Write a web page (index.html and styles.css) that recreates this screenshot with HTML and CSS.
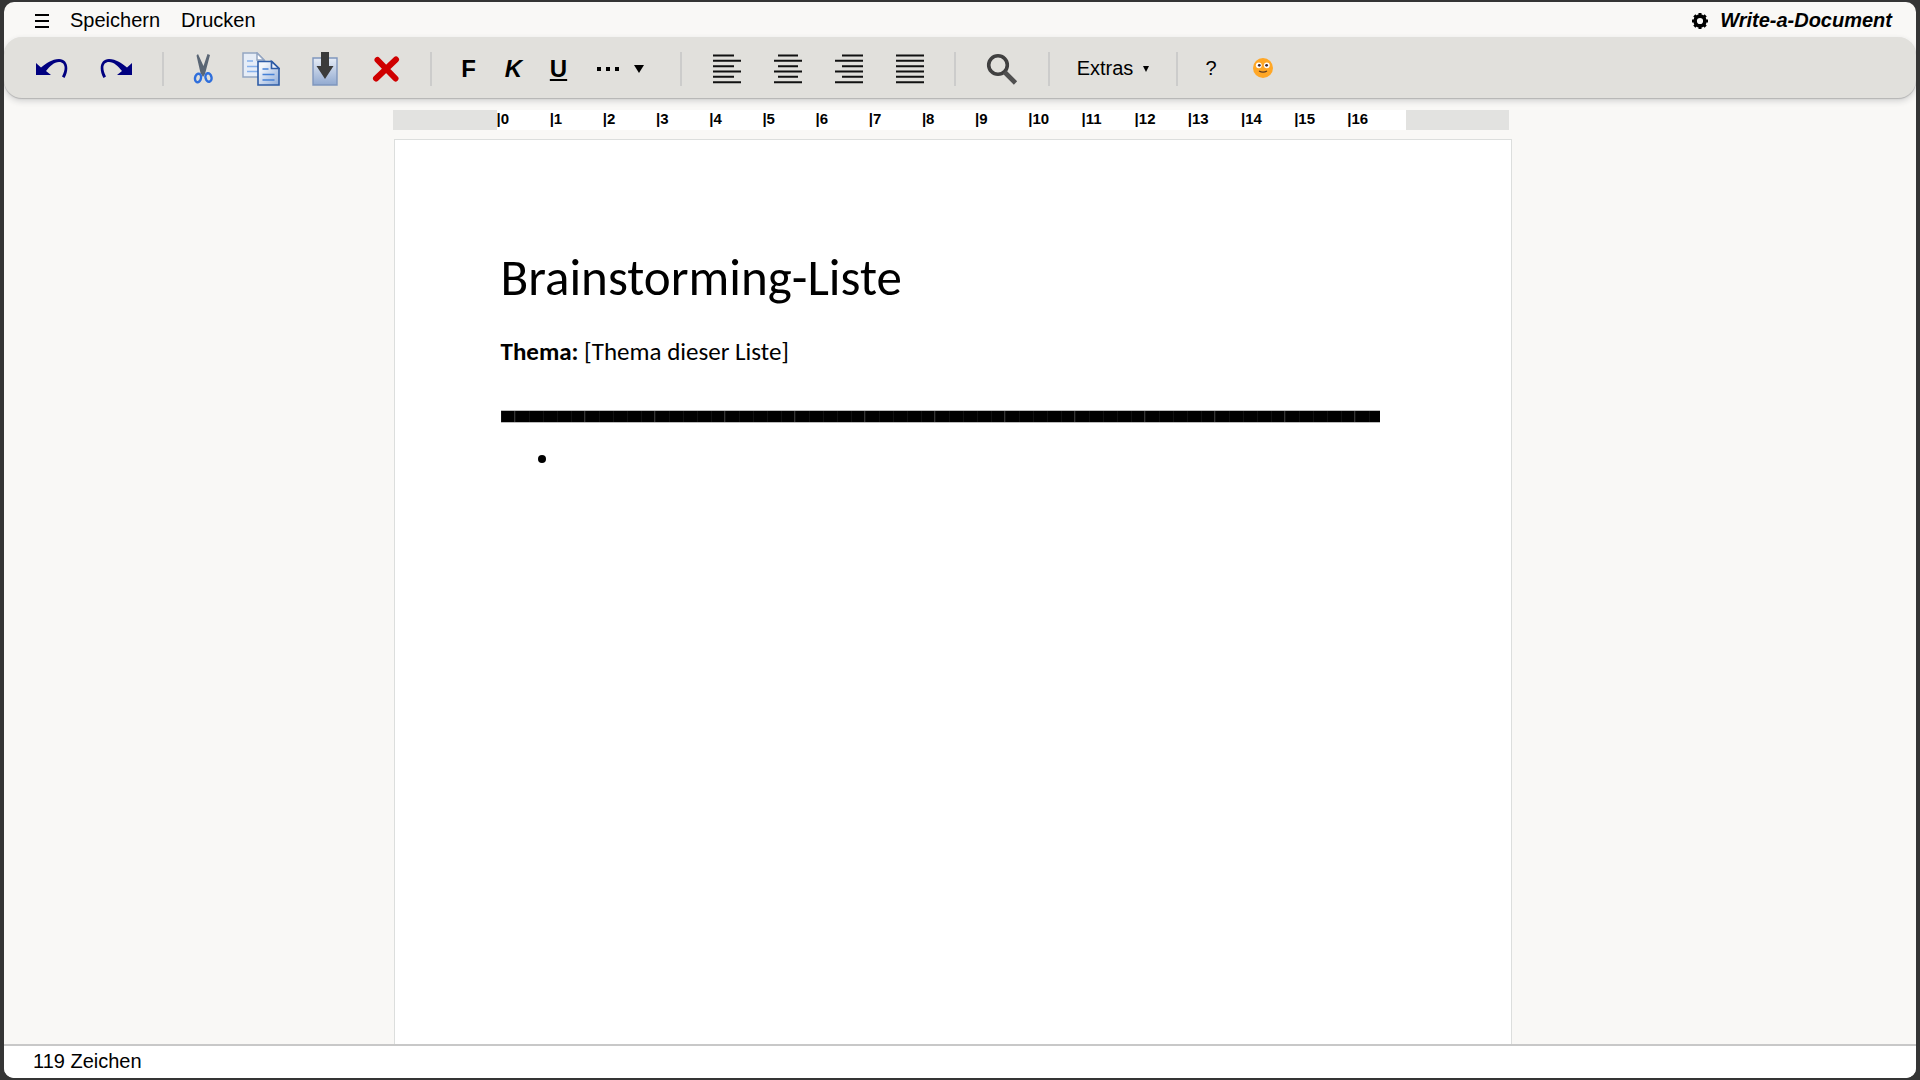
FILE: index.html
```html
<!DOCTYPE html>
<html lang="de">
<head>
<meta charset="utf-8">
<title>Write-a-Document</title>
<link rel="stylesheet" href="styles.css">
</head>
<body>
<div class="window">
  <header class="menubar">
    <button class="menu-btn" aria-label="Menü"><svg width="14" height="14" viewBox="0 0 14 14"><path d="M0 1h14M0 7h14M0 13h14" stroke="#000" stroke-width="2"/></svg></button>
    <button class="menu-btn">Speichern</button>
    <button class="menu-btn">Drucken</button>
    <div class="brand">
      <button class="menu-btn" aria-label="Einstellungen"><svg width="16" height="16" viewBox="0 0 18 18"><circle cx="9" cy="9" r="5.500" fill="none" stroke="#000" stroke-width="4"/><path d="M9 0v3M9 15v3M0 9h3M15 9h3M2.6 2.6l2.2 2.2M13.2 13.2l2.2 2.2M2.6 15.4l2.2-2.2M13.2 4.8l2.2-2.2" stroke="#000" stroke-width="3.4"/></svg></button>
      <span class="brand-name">Write-a-Document</span>
    </div>
  </header>

  <div class="toolbar" role="toolbar" aria-label="Werkzeuge">
    <button class="tool history" aria-label="Rückgängig"><svg width="32" height="20" viewBox="0 0 32 20"><path d="M0 4v12h15l-5-4C14 7 18 3 23 3c6 0 7.500 6 3 14.500l2.500 1.500C34 9 31 0 23 0 16 0 10 4.500 5 8.500z" fill="#000080"/></svg></button>
    <button class="tool history" aria-label="Wiederholen"><svg width="32" height="20" viewBox="0 0 32 20"><path transform="matrix(-1 0 0 1 32 0)" d="M0 4v12h15l-5-4C14 7 18 3 23 3c6 0 7.500 6 3 14.500l2.500 1.500C34 9 31 0 23 0 16 0 10 4.500 5 8.500z" fill="#000080"/></svg></button>
    <span class="sep"></span>
    <button class="tool cut" aria-label="Ausschneiden"><svg width="20" height="30" viewBox="0 0 20 30"><path d="M3.500 1.500L5 0l5.500 12L14.500 0 17 1l-5 19-2 3-2.500-4z" fill="#5a6675"/><ellipse cx="5" cy="24" rx="3" ry="4.300" fill="none" stroke="#2f6fdc" stroke-width="2.400" transform="rotate(12 5 24)"/><ellipse cx="15.500" cy="23.500" rx="3" ry="4.300" fill="none" stroke="#2f6fdc" stroke-width="2.400" transform="rotate(-12 15.500 23.500)"/></svg></button>
    <button class="tool copy" aria-label="Kopieren"><svg width="38" height="34" viewBox="0 0 38 34">
      <defs><linearGradient id="sheet" x1="0" y1="0" x2="1" y2="1"><stop offset=".2" stop-color="#f4f7fc"/><stop offset="1" stop-color="#8eabd8"/></linearGradient></defs>
      <path d="M1 1h14l7 7v17H1z" fill="#e6edf7" stroke="#94a6c2" stroke-width="1.500"/><path d="M15 1v7h7z" fill="#fff" stroke="#94a6c2" stroke-width="1.500"/>
      <path d="M5 9h6M5 14.500h11M5 19.500h11" stroke="#86b1ec" stroke-width="1.500"/>
      <path d="M16 9.500h14l7 7V33H16z" fill="url(#sheet)" stroke="#2e5ca6" stroke-width="1.600"/><path d="M29.500 9.500v7H37z" fill="#eef3fb" stroke="#2e5ca6" stroke-width="1.600"/>
      <path d="M20.500 17h6M20.500 22.500h12M20.500 28h12" stroke="#4681d6" stroke-width="1.700"/></svg></button>
    <button class="tool" aria-label="Einfügen"><svg width="26" height="34" viewBox="0 0 26 34">
      <defs><linearGradient id="tray" x1="0" y1="0" x2="0" y2="1"><stop offset="0" stop-color="#e6ecf5"/><stop offset="1" stop-color="#91a9d0"/></linearGradient></defs>
      <path d="M1 6h24v27H1z" fill="url(#tray)" stroke="#7f96bd" stroke-width="1.400"/><path d="M9 0h8v14h4.500L13 27 4.500 14H9z" fill="#3b3b3b"/></svg></button>
    <button class="tool" aria-label="Löschen"><svg width="28" height="28" viewBox="0 0 28 28"><path d="M5.500 5L23.500 23.500M24 4.500L4 23.500" stroke="#cf0000" stroke-width="6" stroke-linecap="round"/></svg></button>
    <span class="sep"></span>
    <button class="tool format" aria-label="Fett">F</button>
    <button class="tool format italic" aria-label="Kursiv">K</button>
    <button class="tool format underline" aria-label="Unterstrichen">U</button>
    <button class="tool more" aria-label="Weitere Formatierungen"><svg width="22" height="4" viewBox="0 0 22 4"><path d="M0 0h4v4H0zM9 0h4v4H9zM18 0h4v4h-4z"/></svg><svg width="10" height="8" viewBox="0 0 10 8"><path d="M0 0h10L5 8z"/></svg></button>
    <span class="sep"></span>
    <button class="tool" aria-label="Linksbündig"><svg class="align" viewBox="0 0 28 30"><path d="M0 1.500h21M0 6.800h28M0 12.200h21M0 17.500h28M0 22.800h21M0 28.200h28"/></svg></button>
    <button class="tool" aria-label="Zentriert"><svg class="align" viewBox="0 0 28 30"><path d="M4 1.500h20M0 6.800h28M4 12.200h20M0 17.500h28M4 22.800h20M0 28.200h28"/></svg></button>
    <button class="tool" aria-label="Rechtsbündig"><svg class="align" viewBox="0 0 28 30"><path d="M7 1.500h21M0 6.800h28M7 12.200h21M0 17.500h28M7 22.800h21M0 28.200h28"/></svg></button>
    <button class="tool" aria-label="Blocksatz"><svg class="align" viewBox="0 0 28 30"><path d="M0 1.500h28M0 6.800h28M0 12.200h28M0 17.500h28M0 22.800h28M0 28.200h28"/></svg></button>
    <span class="sep"></span>
    <button class="tool search" aria-label="Suchen"><svg width="32" height="32" viewBox="0 0 32 32"><circle cx="12" cy="12" r="9.300" fill="none" stroke="#404040" stroke-width="3.600"/><path d="M18.500 19l11 11" stroke="#505050" stroke-width="4.600"/></svg></button>
    <span class="sep"></span>
    <button class="tool extras">Extras <svg width="6" height="6" viewBox="0 0 6 6"><path d="M0 0h6L3 6z"/></svg></button>
    <span class="sep"></span>
    <button class="tool help" aria-label="Hilfe">?</button>
    <button class="tool smiley" aria-label="Emoji einfügen"><svg width="20" height="20" viewBox="0 0 20 20"><circle cx="10" cy="10" r="10" fill="#ffa726"/><circle cx="5.800" cy="7.300" r="2.900" fill="#fff"/><circle cx="13.800" cy="7.300" r="2.900" fill="#fff"/><circle cx="6.300" cy="7.300" r="1.400" fill="#402a32"/><circle cx="13.600" cy="7.300" r="1.400" fill="#402a32"/><path d="M6 13q4 2.400 8 0" fill="none" stroke="#5b3a20" stroke-width="1.200"/></svg></button>
  </div>

  <main class="workspace">
    <div class="ruler">
      <div class="marks"><span>|0</span><span>|1</span><span>|2</span><span>|3</span><span>|4</span><span>|5</span><span>|6</span><span>|7</span><span>|8</span><span>|9</span><span>|10</span><span>|11</span><span>|12</span><span>|13</span><span>|14</span><span>|15</span><span>|16</span></div>
    </div>
    <article class="page" contenteditable="true" spellcheck="false">
      <h1>Brainstorming-Liste</h1>
      <p class="topic"><strong>Thema:</strong> [Thema dieser Liste]</p>
      <hr>
      <ul><li></li></ul>
    </article>
  </main>

  <footer class="status">119 Zeichen</footer>
</div>
</body>
</html>
```
FILE: styles.css
```css
* { box-sizing: border-box; }

body {
  margin: 0;
  padding: 2px 4px;
  background: #353535;
  color: #000;
  font-family: "Liberation Sans", Arial, sans-serif;
  font-size: 20px;
}

.window {
  display: flex;
  flex-direction: column;
  height: calc(100vh - 4px);
  background: #f9f8f6;
  border-radius: 10px;
  overflow: hidden;
}

button {
  display: flex;
  align-items: center;
  justify-content: center;
  margin: 0;
  padding: 0;
  border: 0;
  background: none;
  color: inherit;
  font: inherit;
}

.menubar {
  display: flex;
  flex: none;
  align-items: center;
  gap: 21px;
  height: 35px;
  padding: 2px 24px 0 31px;
}

.brand {
  display: flex;
  align-items: center;
  gap: 12px;
  margin-left: auto;
}

.brand-name {
  font-weight: bold;
  font-style: italic;
}

.toolbar {
  display: flex;
  flex: none;
  align-items: center;
  height: 61px;
  padding: 2px 16px 0;
  border-radius: 18px;
  background: #e1e0dc;
  box-shadow: 0 1px 1px #b4b4b4, 0 3px 6px #d0d0d0;
}

.tool { width: 61px; height: 100%; }
.history { width: 64px; }
.cut { width: 50px; }
.copy { width: 66px; }
.search { width: 64px; }
.help { width: 38px; }
.smiley { width: 66px; padding-bottom: 2px; }

.sep {
  flex: none;
  width: 2px;
  height: 34px;
  margin: 0 14px;
  background: #cccccb;
}

.format {
  width: 45px;
  font-size: 24px;
  font-weight: bold;
}

.italic { font-style: italic; }
.underline { text-decoration: underline; }

.more {
  justify-content: flex-start;
  gap: 15px;
  width: 85px;
  padding-left: 16px;
}

.align {
  width: 28px;
  height: 30px;
  stroke: #111;
  stroke-width: 2;
}

.extras {
  gap: 10px;
  width: 98px;
}

.workspace {
  flex: 1;
  min-height: 0;
  padding: 12px 15px 0 0;
  overflow: hidden;
}

.ruler {
  display: grid;
  width: 100%;
  max-width: 1120px;
  height: 20px;
  margin: 0 auto;
  padding: 0 103px 0 104px;
  border-right: 4px solid #f9f8f6;
  background: #e2e2e0;
}

.marks {
  display: grid;
  grid-template-columns: repeat(17, 1fr);
  padding-right: 5px;
  background: #fff;
  font-size: 15px;
  font-weight: bold;
  line-height: 18px;
}

.page {
  width: 100%;
  max-width: 1118px;
  min-height: 1500px;
  margin: 9px auto 0;
  padding: 106px 131px 0 106px;
  border: 1px solid #dcdedd;
  background: #fff;
  font-family: Carlito, Calibri, Lato, sans-serif;
  outline: 0;
}

.page h1 {
  margin: 0;
  font-size: 51px;
  font-weight: 400;
  line-height: 64px;
}

.topic {
  margin: 26px 0 0;
  font-size: 25px;
  line-height: 32px;
}

.page hr {
  height: 13px;
  margin: 42px 0 0;
  border: solid #bbb;
  border-width: 1px 0;
  background:
    repeating-linear-gradient(90deg, #0000 0 13px, #333 13px 14px, #0000 14px 70px),
    repeating-linear-gradient(90deg, #101010 0 1px, #000 1px 14px);
}

.page ul {
  margin: 20px 0 0;
  padding-left: 60px;
  font-size: 25px;
  line-height: 32px;
}

.status {
  flex: none;
  height: 34px;
  padding-left: 29px;
  border-top: 2px solid #c8c8c8;
  background: #fff;
  line-height: 30px;
}
```
